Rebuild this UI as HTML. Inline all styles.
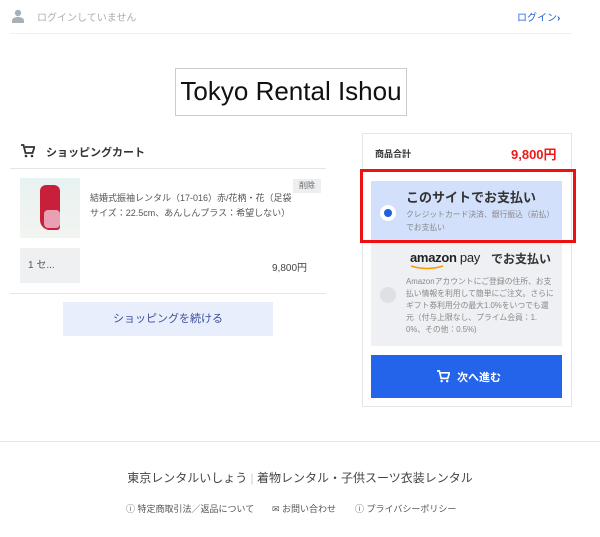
<!DOCTYPE html>
<html><head><meta charset="utf-8"><style>
*{margin:0;padding:0;box-sizing:border-box}
body{width:600px;height:537px;background:#fff;position:relative;overflow:hidden;font-family:"Liberation Sans","Noto Sans CJK JP",sans-serif;color:#333}
.a{position:absolute;white-space:nowrap}
</style></head><body>
<svg class="a" style="left:11px;top:9px" width="14" height="14" viewBox="0 0 14 14"><circle cx="7" cy="4" r="3.2" fill="#a8b0b8"/><path d="M1 14v-2c0-3 3-4 6-4s6 1 6 4v2z" fill="#a8b0b8"/></svg>
<div class="a" style="left:37px;top:9px;font-size:10px;color:#a9aeb3">ログインしていません</div>
<div class="a" style="left:517px;top:9px;font-size:10px;color:#2a62d9">ログイン<b>›</b></div>
<div class="a" style="left:10px;top:33px;width:562px;height:1px;background:#eef0f1"></div>
<div class="a" style="left:175px;top:68px;width:232px;height:48px;border:1px solid #ccc;font-size:26px;color:#111;text-align:center;line-height:44px">Tokyo Rental Ishou</div>

<svg class="a" style="left:21px;top:144px" width="14" height="14" viewBox="0 0 14 14"><path d="M0 1h2.5l2 8h7l2-6H4" fill="none" stroke="#333" stroke-width="1.8"/><circle cx="5" cy="12" r="1.3" fill="#333"/><circle cx="11" cy="12" r="1.3" fill="#333"/></svg>
<div class="a" style="left:46px;top:144px;font-size:11px;font-weight:bold;color:#333">ショッピングカート</div>
<div class="a" style="left:10px;top:168px;width:316px;height:1px;background:#e3e5e7"></div>
<div class="a" style="left:20px;top:178px;width:60px;height:60px;background:linear-gradient(#e8f2f2,#f2f4f0)"></div>
<div class="a" style="left:40px;top:185px;width:20px;height:45px;background:#c8203a;border-radius:6px 6px 3px 10px"></div>
<div class="a" style="left:44px;top:210px;width:16px;height:18px;background:#e8a0b4;border-radius:4px"></div>
<div class="a" style="left:90px;top:191px;font-size:9px;line-height:15px;color:#555;white-space:normal;width:206px">結婚式振袖レンタル（17-016）赤/花柄・花（足袋サイズ：22.5cm、あんしんプラス：希望しない）</div>
<div class="a" style="left:293px;top:179px;width:28px;height:14px;background:#eceef0;font-size:8px;color:#666;text-align:center;line-height:14px">削除</div>
<div class="a" style="left:20px;top:248px;width:60px;height:35px;background:#eef0f2;font-size:10px;color:#555;line-height:35px;padding-left:8px">1 セ...</div>
<div class="a" style="left:272px;top:259px;font-size:10px;color:#444">9,800円</div>
<div class="a" style="left:10px;top:293px;width:316px;height:1px;background:#e3e5e7"></div>
<div class="a" style="left:63px;top:302px;width:210px;height:34px;background:#e8eefb;font-size:11px;color:#3d4f9f;text-align:center;line-height:34px">ショッピングを続ける</div>

<div class="a" style="left:362px;top:133px;width:210px;height:274px;border:1px solid #e3e5e7"></div>
<div class="a" style="left:375px;top:147px;font-size:9px;font-weight:bold;color:#333">商品合計</div>
<div class="a" style="left:511px;top:144px;font-size:13px;font-weight:bold;color:#f01818">9,800円</div>
<div class="a" style="left:371px;top:181px;width:191px;height:61px;background:#d3e0fb"></div>
<div class="a" style="left:380px;top:205px;width:16px;height:16px;border-radius:50%;background:#fff"></div>
<div class="a" style="left:384px;top:209px;width:8px;height:8px;border-radius:50%;background:#1f5fe0"></div>
<div class="a" style="left:406px;top:187px;font-size:13px;font-weight:bold;color:#333">このサイトでお支払い</div>
<div class="a" style="left:406px;top:208px;font-size:7.8px;line-height:13px;color:#888">クレジットカード決済、銀行振込（前払）<br>でお支払い</div>
<div class="a" style="left:360px;top:169px;width:216px;height:74px;border:3px solid #ee1111"></div>
<div class="a" style="left:371px;top:243px;width:191px;height:103px;background:#eef0f3"></div>
<div class="a" style="left:380px;top:287px;width:16px;height:16px;border-radius:50%;background:#dde0e4"></div>
<div class="a" style="left:410px;top:250px;font-size:13px;font-weight:bold;color:#222;letter-spacing:-0.3px">amazon <span style="font-weight:normal">pay</span></div>
<svg class="a" style="left:410px;top:265px" width="36" height="5" viewBox="0 0 36 5"><path d="M1 1q16 5 32 0" fill="none" stroke="#f90" stroke-width="1.5"/></svg>
<div class="a" style="left:491px;top:250px;font-size:12px;font-weight:bold;color:#333">でお支払い</div>
<div class="a" style="left:406px;top:276px;font-size:7.8px;line-height:12px;color:#888">Amazonアカウントにご登録の住所、お支<br>払い情報を利用して簡単にご注文。さらに<br>ギフト券利用分の最大1.0%をいつでも還<br>元（付与上限なし、プライム会員：1.<br>0%、その他：0.5%)</div>
<div class="a" style="left:371px;top:355px;width:191px;height:43px;background:#2364eb"></div>
<svg class="a" style="left:437px;top:370px" width="13" height="13" viewBox="0 0 14 14"><path d="M0 1h2.5l2 8h7l2-6H4" fill="none" stroke="#fff" stroke-width="1.8"/><circle cx="5" cy="12" r="1.3" fill="#fff"/><circle cx="11" cy="12" r="1.3" fill="#fff"/></svg>
<div class="a" style="left:457px;top:369px;font-size:11px;font-weight:bold;color:#fff">次へ進む</div>

<div class="a" style="left:0;top:441px;width:600px;height:1px;background:#e6e9ea"></div>
<div class="a" style="left:0;top:469px;width:600px;text-align:center;font-size:12px;color:#444">東京レンタルいしょう<span style="color:#ccc"> | </span>着物レンタル・子供スーツ衣装レンタル</div>
<div class="a" style="left:126px;top:502px;font-size:9px;color:#555">ⓘ 特定商取引法／返品について</div>
<div class="a" style="left:272px;top:502px;font-size:9px;color:#555">✉ お問い合わせ</div>
<div class="a" style="left:355px;top:502px;font-size:9px;color:#555">ⓘ プライバシーポリシー</div>
</body></html>
